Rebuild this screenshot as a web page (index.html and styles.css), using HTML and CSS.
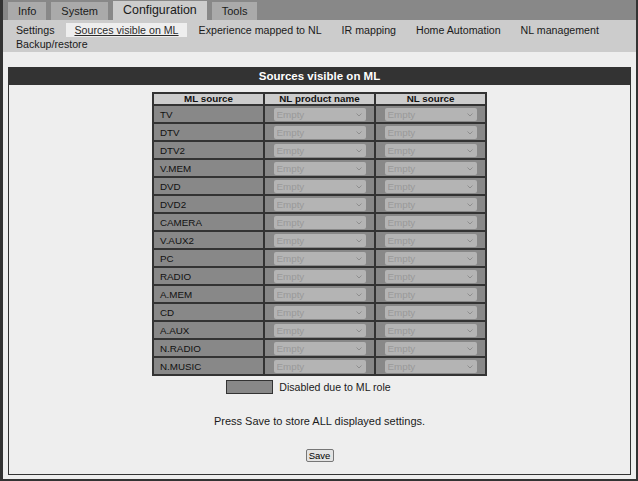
FILE: index.html
```html
<!DOCTYPE html>
<html lang="en">
<head>
<meta charset="utf-8">
<title>Sources visible on ML</title>
<link rel="stylesheet" href="styles.css">
</head>
<body>
<div class="window">
  <div class="tabbar">
    <a class="tab">Info</a>
    <a class="tab">System</a>
    <a class="tab tab-active">Configuration</a>
    <a class="tab">Tools</a>
  </div>
  <nav class="subnav">
    <a class="subnav-item">Settings</a>
    <a class="subnav-item subnav-current">Sources visible on ML</a>
    <a class="subnav-item">Experience mapped to NL</a>
    <a class="subnav-item">IR mapping</a>
    <a class="subnav-item">Home Automation</a>
    <a class="subnav-item">NL management</a>
    <a class="subnav-item">Backup/restore</a>
  </nav>
  <main class="content">
    <section class="panel">
      <h2 class="panel-title">Sources visible on ML</h2>
      <div class="panel-body">
        <table class="sources">
          <thead>
            <tr><th>ML source</th><th>NL product name</th><th>NL source</th></tr>
          </thead>
          <tbody id="rows"></tbody>
        </table>
        <div class="legend"><span class="swatch"></span><span class="legend-text">Disabled due to ML role</span></div>
        <p class="hint">Press Save to store ALL displayed settings.</p>
        <button class="save" type="button">Save</button>
      </div>
    </section>
  </main>
</div>
<script>
(function () {
  var names = ["TV","DTV","DTV2","V.MEM","DVD","DVD2","CAMERA","V.AUX2","PC","RADIO","A.MEM","CD","A.AUX","N.RADIO","N.MUSIC"];
  var chevron = '<svg class="chev" width="6" height="4" viewBox="0 0 6 4"><path d="M0.5 0.5 L3 3 L5.5 0.5" fill="none" stroke="#8e8e8e" stroke-width="1"/></svg>';
  var sel = '<span class="select"><select disabled><option>Empty</option></select>' + chevron + '</span>';
  var html = "";
  for (var i = 0; i < names.length; i++) {
    html += '<tr><td class="src">' + names[i] + '</td><td class="pick">' + sel + '</td><td class="pick">' + sel + '</td></tr>';
  }
  document.getElementById("rows").innerHTML = html;
})();
</script>
</body>
</html>
```

FILE: styles.css
```css
* { box-sizing: border-box; }

html, body {
  margin: 0;
  padding: 0;
}

body {
  background: #333333;
  height: 481px;
  overflow: hidden;
  font-family: "Liberation Sans", Arial, sans-serif;
  color: #1c1c1c;
}

.window {
  margin-left: 3px;
  width: 633px;
  height: 479px;
  background: #eeeeee;
  display: flex;
  flex-direction: column;
}

.tabbar {
  height: 20px;
  background: #888888;
  display: flex;
  align-items: flex-end;
  gap: 5px;
  padding-left: 5px;
}

.tab {
  height: 18px;
  line-height: 18px;
  padding: 0 10px;
  background: #aaaaaa;
  font-size: 11px;
  color: #1a1a1a;
}

.tab-active {
  height: 19px;
  line-height: 19px;
  background: #cccccc;
  font-size: 12.4px;
}

.subnav {
  background: #cccccc;
  display: flex;
  flex-wrap: wrap;
  column-gap: 4px;
  padding: 3px 5px 1px 5px;
  font-size: 10.65px;
  line-height: 14px;
}

.subnav-item {
  padding: 0 8px;
  color: #1a1a1a;
}

.subnav-current {
  background: #eeeeee;
  text-decoration: underline;
  color: #2a2a2a;
}

.content {
  flex: 1;
  padding: 15px 5px 4px 5px;
  display: flex;
}

.panel {
  flex: 1;
  border: 1px solid #333333;
  display: flex;
  flex-direction: column;
}

.panel-title {
  margin: 0;
  height: 17px;
  line-height: 17px;
  background: #333333;
  color: #ffffff;
  font-size: 11.5px;
  font-weight: bold;
  text-align: center;
}

.panel-body {
  flex: 1;
  display: flex;
  flex-direction: column;
  align-items: center;
  padding-top: 7px;
}

.sources {
  border: 1px solid #333333;
  border-collapse: separate;
  border-spacing: 0;
  font-size: 9.8px;
}

.sources th,
.sources td {
  border: 1px solid #333333;
  padding: 0;
  width: 111px;
}

.sources th {
  background: #cccccc;
  height: 12px;
  line-height: 10px;
  font-weight: bold;
  text-align: center;
  color: #111111;
}

.sources td {
  background: #888888;
  height: 18px;
  vertical-align: middle;
}

.sources td.src {
  padding-left: 6px;
  color: #111111;
}

.sources td.pick {
  text-align: center;
  line-height: 0;
}

.select {
  position: relative;
  display: inline-block;
  width: 92px;
  height: 13px;
  vertical-align: middle;
}

.select select {
  appearance: none;
  -webkit-appearance: none;
  display: block;
  width: 92px;
  height: 13px;
  margin: 0;
  border: 0;
  border-radius: 2px;
  padding: 0 0 0 3px;
  background: #b4b4b4;
  color: #999999;
  opacity: 1;
  font-family: "Liberation Sans", Arial, sans-serif;
  font-size: 9.8px;
  line-height: 13px;
  text-align: left;
}

.chev {
  position: absolute;
  right: 4px;
  top: 5px;
}

.legend {
  margin-top: 4px;
  display: flex;
  align-items: center;
  padding-right: 22px;
}

.swatch {
  width: 47px;
  height: 14px;
  background: #888888;
  border: 1px solid #333333;
}

.legend-text {
  margin-left: 6px;
  font-size: 10.6px;
  color: #1a1a1a;
}

.hint {
  margin: 21px 0 0 0;
  font-size: 11px;
  line-height: 13px;
  color: #1a1a1a;
}

.save {
  margin-top: 21px;
  height: 13px;
  width: 28px;
  padding: 0;
  border: 1px solid #767676;
  border-radius: 2px;
  background: #e3e3e3;
  color: #000000;
  font-family: "Liberation Sans", Arial, sans-serif;
  font-size: 9.5px;
  line-height: 11px;
}
```
